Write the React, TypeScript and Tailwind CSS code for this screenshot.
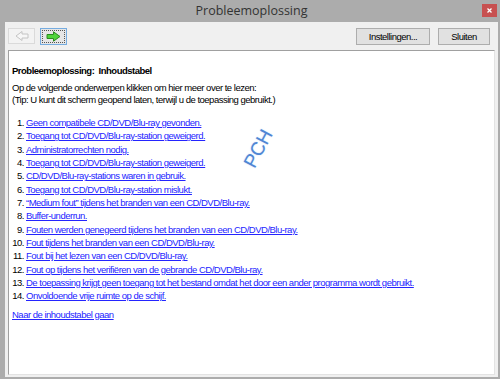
import React from "react";

const items = [
  "Geen compatibele CD/DVD/Blu-ray gevonden.",
  "Toegang tot CD/DVD/Blu-ray-station geweigerd.",
  "Administratorrechten nodig.",
  "Toegang tot CD/DVD/Blu-ray-station geweigerd.",
  "CD/DVD/Blu-ray-stations waren in gebruik.",
  "Toegang tot CD/DVD/Blu-ray-station mislukt.",
  "\u201cMedium fout\u201d tijdens het branden van een CD/DVD/Blu-ray.",
  "Buffer-underrun.",
  "Fouten werden genegeerd tijdens het branden van een CD/DVD/Blu-ray.",
  "Fout tijdens het branden van een CD/DVD/Blu-ray.",
  "Fout bij het lezen van een CD/DVD/Blu-ray.",
  "Fout op tijdens het verifi\u00ebren van de gebrande CD/DVD/Blu-ray.",
  "De toepassing krijgt geen toegang tot het bestand omdat het door een ander programma wordt gebruikt.",
  "Onvoldoende vrije ruimte op de schijf.",
];

const body = { fontFamily: '"Liberation Sans", Arial, sans-serif' };

export default function App() {
  return (
    <div className="w-[500px] h-[379px] bg-[#acacac] flex flex-col pl-[5px] pr-[2px] pb-[2px] overflow-hidden">
      <div className="h-[22px] relative flex items-center justify-center shrink-0">
        <span className="text-[12.5px] text-[#333] leading-none" style={{ fontFamily: '"Open Sans", "Noto Sans", sans-serif' }}>
          Probleemoplossing
        </span>
        <div className="absolute right-[1px] top-[4px] w-[15px] h-[13px] bg-[#c75050] flex items-center justify-center">
          <svg width="5" height="5" viewBox="0 0 5 5">
            <path d="M0.5 0.5 L4.5 4.5 M4.5 0.5 L0.5 4.5" stroke="#fff" strokeWidth="1.3" />
          </svg>
        </div>
      </div>
      <div className="flex-1 bg-[#f0f0f0] flex flex-col min-h-0">
        <div className="h-[28px] shrink-0 flex items-start pt-[6px] pl-[3px] pr-[8px]">
          <div className="w-[27px] h-[16px] border border-[#dadada] bg-[#f3f3f3] flex items-center justify-center">
            <svg width="14" height="10" viewBox="0 0 14 10">
              <path d="M13 3 H7 V0.5 L1 5 L7 9.5 V7 H13 Z" fill="#f7f7f7" stroke="#c4c4c4" strokeWidth="1" />
            </svg>
          </div>
          <div className="ml-[5px] w-[27px] h-[17px] border border-[#76ace0] bg-[#e6e6e6] p-[1px]">
            <div className="w-full h-full border border-dotted border-[#555] flex items-center justify-center">
              <svg width="15" height="11" viewBox="0 0 15 11">
                <path d="M1 3.5 H7.5 V0.8 L14 5.5 L7.5 10.2 V7.5 H1 Z" fill="#4fd43a" stroke="#2c8a22" strokeWidth="1" />
              </svg>
            </div>
          </div>
          <div className="flex-1" />
          <div
            className="w-[74px] h-[17px] border border-[#adadad] bg-[#e1e1e1] flex items-center justify-center text-[9.5px] tracking-[-0.5px] text-black leading-none"
            style={body}
          >
            Instellingen...
          </div>
          <div
            className="ml-[8px] w-[52px] h-[17px] border border-[#adadad] bg-[#e1e1e1] flex items-center justify-center text-[9.5px] tracking-[-0.5px] text-black leading-none"
            style={body}
          >
            Sluiten
          </div>
        </div>
        <div className="flex-1 ml-[3px] mr-[3px] mb-[2px] border border-t-[#a0a0a0] border-l-[#a0a0a0] border-r-[#e3e3e3] border-b-[#e3e3e3] bg-white relative min-h-0">
          <div className="pl-[3px] pt-[13px] text-[9.5px] tracking-[-0.5px] text-black" style={body}>
            <div className="font-bold leading-[13px] h-[13px]">Probleemoplossing:&nbsp; Inhoudstabel</div>
            <div className="mt-[5px] leading-[12px]">Op de volgende onderwerpen klikken om hier meer over te lezen:</div>
            <div className="leading-[12px]">(Tip: U kunt dit scherm geopend laten, terwijl u de toepassing gebruikt.)</div>
            <div className="mt-[10px]">
              {items.map((t, i) => (
                <div key={i} className="flex h-[13.33px] leading-[13.33px] whitespace-nowrap">
                  <span className="w-[12px] text-right mr-[2px]">{i + 1}.</span>
                  <span className="text-[#2424ff] underline">{t}</span>
                </div>
              ))}
            </div>
            <div className="mt-[5px] leading-[13px] text-[#2424ff] underline">Naar de inhoudstabel gaan</div>
          </div>
          <div
            className="absolute left-[229px] top-[88px] text-[19px] text-[#4f86d4] -rotate-[62deg] leading-none"
            style={{ fontFamily: '"Liberation Sans", Arial, sans-serif', textShadow: "0 0 1px #c9dcf6, 0 0 2px #dde9f9" }}
          >
            PCH
          </div>
        </div>
      </div>
    </div>
  );
}
